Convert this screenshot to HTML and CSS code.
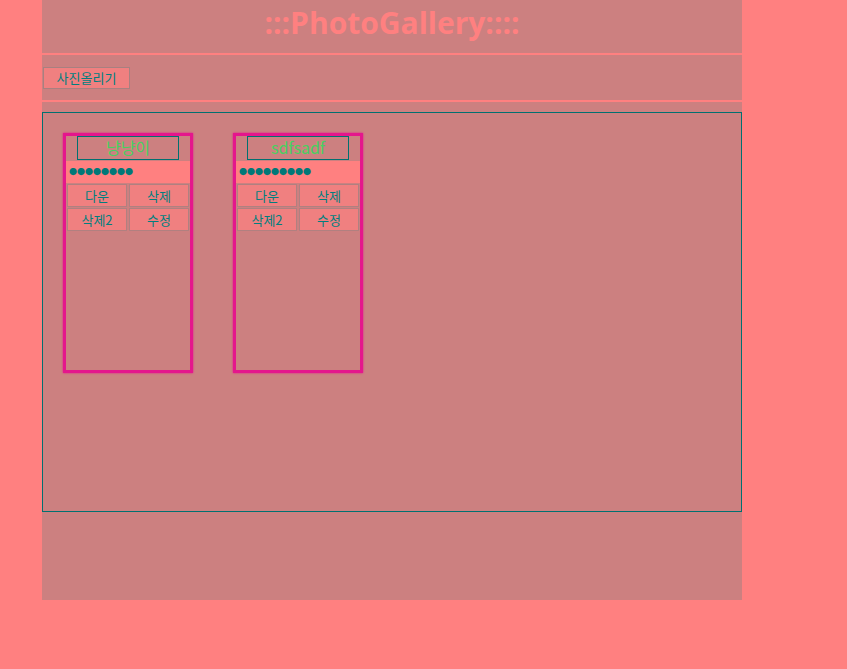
FILE: index.html
```html
<!DOCTYPE html>
<html lang="ko">
<head>
<meta charset="utf-8">
<title>PhotoGallery</title>
<link rel="stylesheet" href="styles.css">
</head>
<body>
<div class="page">
  <header class="top"><h1 class="title">:::PhotoGallery::::</h1></header>
  <nav class="bar"><button class="upload">사진올리기</button></nav>
  <main class="main">
    <div class="gallery">
      <div class="card">
        <div class="name">냥냥이</div>
        <div class="pw">●●●●●●●●</div>
        <div class="btns">
          <button class="btn">다운</button>
          <button class="btn">삭제</button>
          <button class="btn">삭제2</button>
          <button class="btn">수정</button>
        </div>
      </div>
      <div class="card">
        <div class="name">sdfsadf</div>
        <div class="pw">●●●●●●●●●</div>
        <div class="btns">
          <button class="btn">다운</button>
          <button class="btn">삭제</button>
          <button class="btn">삭제2</button>
          <button class="btn">수정</button>
        </div>
      </div>
    </div>
  </main>
</div>
</body>
</html>
```
FILE: styles.css
```css
body {
  margin: 0;
  background: #ff8080;
  font-family: "Noto Sans CJK KR", "Noto Sans", sans-serif;
}
.page {
  width: 700px;
  margin-left: 42px;
  display: flex;
  flex-direction: column;
  gap: 2px;
}
.top {
  height: 53px;
  box-sizing: border-box;
  background: #cc8080;
  display: flex;
  justify-content: center;
  align-items: flex-start;
  padding-top: 6px;
}
.title {
  margin: 0;
  font-family: "Open Sans", sans-serif;
  font-weight: 700;
  font-size: 30px;
  color: #ff8080;
  line-height: 34px;
}
.bar {
  height: 45px;
  background: #cc8080;
  display: flex;
  align-items: center;
  padding-left: 1px;
}
.upload {
  height: 22px;
  width: 87px;
  padding: 0;
  background: #f08080;
  border: 1px solid #a88080;
  color: #007f7f;
  font-family: "Noto Sans CJK KR", sans-serif;
  font-size: 13px;
  line-height: 1;
}
.main {
  height: 498px;
  background: #cc8080;
  padding-top: 10px;
  box-sizing: border-box;
}
.gallery {
  height: 400px;
  box-sizing: border-box;
  border: 1px solid #007070;
  padding: 20px;
  display: flex;
  align-items: flex-start;
  gap: 40px;
}
.card {
  width: 130px;
  height: 240px;
  box-sizing: border-box;
  border: 3px solid #e4168c;
  box-shadow: 0 0 2px #e4168c;
  display: flex;
  flex-direction: column;
}
.name {
  width: 102px;
  height: 24px;
  box-sizing: border-box;
  margin: 0 auto;
  border: 1px solid #007070;
  color: #48d060;
  font-size: 16px;
  text-align: center;
  line-height: 21px;
}
.pw {
  height: 22px;
  background: #ff8080;
  color: #007878;
  font-size: 8px;
  line-height: 22px;
  padding-left: 3px;
  margin-top: 1px;
}
.btns {
  display: grid;
  grid-template-columns: 60px 60px;
  gap: 1px 2px;
  padding: 0 1px;
  margin-top: 1px;
}
.btn {
  height: 23px;
  padding: 0;
  background: #f08080;
  border: 1px solid #b08080;
  color: #007f7f;
  font-family: "Noto Sans CJK KR", sans-serif;
  font-size: 13px;
  line-height: 1;
}
```
